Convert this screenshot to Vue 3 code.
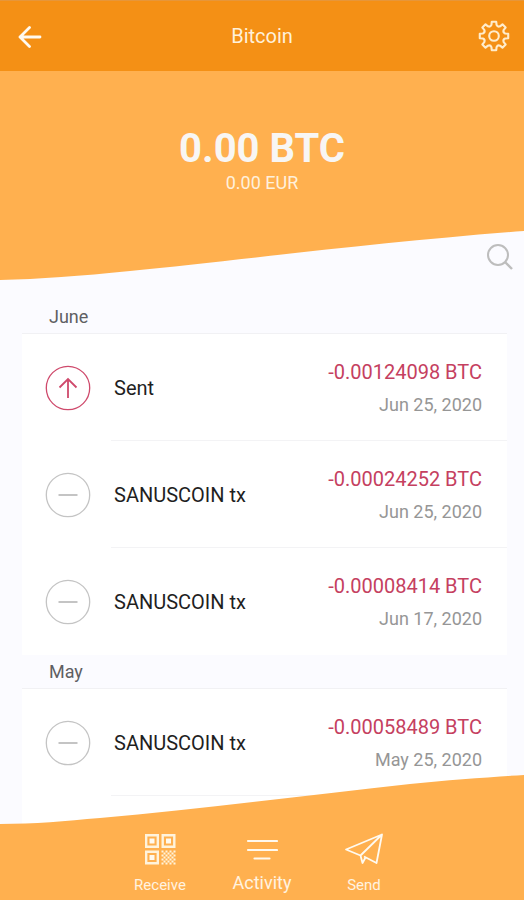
<script setup>
const months = [
  {
    name: 'June',
    items: [
      { label: 'Sent', type: 'sent', amount: '-0.00124098 BTC', date: 'Jun 25, 2020' },
      { label: 'SANUSCOIN tx', type: 'token', amount: '-0.00024252 BTC', date: 'Jun 25, 2020' },
      { label: 'SANUSCOIN tx', type: 'token', amount: '-0.00008414 BTC', date: 'Jun 17, 2020' },
    ],
  },
  {
    name: 'May',
    items: [
      { label: 'SANUSCOIN tx', type: 'token', amount: '-0.00058489 BTC', date: 'May 25, 2020' },
    ],
  },
]

// Outline of a gear centred on the origin, with rounded valleys between the teeth.
function gearPath(teeth, outer, root) {
  const step = 360 / teeth
  const point = (radius, degrees) => {
    const a = (degrees * Math.PI) / 180
    return `${(radius * Math.sin(a)).toFixed(2)} ${(-radius * Math.cos(a)).toFixed(2)}`
  }
  let d = `M${point(outer, -9)}`
  for (let i = 0; i < teeth; i++) {
    const a = i * step
    d += `L${point(outer, a + 9)}L${point(root + 1, a + 13)}`
    d += `Q${point(root - 1, a + step / 2)} ${point(root + 1, a + step - 13)}L${point(outer, a + step - 9)}`
  }
  return `${d}Z`
}
const gear = gearPath(8, 14.4, 10.4)
</script>

<template>
  <div class="wallet">
    <header class="bar">
      <button class="icon-button" type="button" aria-label="Back">
        <svg width="24" height="24" viewBox="0 0 24 24" fill="none" stroke="#fffaf0" stroke-width="2.8" stroke-linecap="round" stroke-linejoin="round">
          <path d="M22 13H2M11.500 3.500L2 13l9.500 9.500" />
        </svg>
      </button>
      <h1 class="title">Bitcoin</h1>
      <button class="icon-button" type="button" aria-label="Settings">
        <svg width="32" height="32" viewBox="-16 -16 32 32" fill="none" stroke="#ffeccb" stroke-width="2.1" stroke-linejoin="round">
          <path :d="gear" />
          <circle r="4.8" />
        </svg>
      </button>
    </header>

    <section class="balance">
      <p class="crypto">0.00 BTC</p>
      <p class="fiat">0.00 EUR</p>
    </section>
    <div class="slope-row">
      <svg class="slope" viewBox="0 0 524 50" preserveAspectRatio="none" aria-hidden="true">
        <path d="M0 0H524V1C380 12 240 30 130 41C80 46 40 49 0 50Z" />
      </svg>
      <button class="search" type="button" aria-label="Search">
        <svg width="28" height="28" viewBox="0 0 28 28" fill="none" stroke="#bdbdbd" stroke-width="2">
          <circle cx="12" cy="12" r="10" />
          <path d="M19 19l7 7" stroke-width="2.4" />
        </svg>
      </button>
    </div>

    <main class="history">
      <section v-for="month in months" :key="month.name" class="group">
        <h2 class="month">{{ month.name }}</h2>
        <ul class="list">
          <li v-for="(tx, i) in month.items" :key="i" class="tx">
            <svg class="badge" :class="tx.type" width="46" height="46" viewBox="0 0 46 46" fill="none" stroke="currentColor" aria-hidden="true">
              <circle cx="23" cy="23" r="21.7" stroke-width="1.3" />
              <path v-if="tx.type === 'sent'" d="M23 33V14M14.5 22.5L23 14l8.500 8.500" stroke-width="1.8" />
              <path v-else d="M13.500 23h19" stroke-width="2" />
            </svg>
            <div class="detail">
              <span class="label">{{ tx.label }}</span>
              <span class="figures">
                <span class="amount">{{ tx.amount }}</span>
                <span class="date">{{ tx.date }}</span>
              </span>
            </div>
          </li>
        </ul>
      </section>
    </main>

    <footer class="dock">
      <svg class="slope" viewBox="0 0 524 50" preserveAspectRatio="none" aria-hidden="true">
        <path d="M0 50V49C35 49 65 46 100 43C200 34 310 20 410 9C450 5 490 2 524 0V50Z" />
      </svg>
      <nav class="tabs">
        <button class="tab" type="button">
          <svg width="32" height="32" viewBox="0 0 32 32" fill="none" stroke="#fff3dc" aria-hidden="true">
            <path d="M2.200 2.200h11.600v11.600H2.200zM18.700 2.200h11.600v11.600H18.700zM2.200 18.700h11.600v11.600H2.200z" stroke-width="2.400" />
            <path d="M5.500 5.500h5v5h-5zM22 5.500h5v5h-5zM5.500 22h5v5h-5z" fill="#fff9ee" stroke="none" />
            <path d="M17.500 18.500h14M17.500 22.500h14M17.500 26.500h14M17.500 30.500h14" stroke-width="2" stroke-dasharray="2 2" />
            <path d="M19.500 20.500h12M19.500 24.500h12M19.500 28.500h12" stroke-width="2" stroke-dasharray="2 2" />
          </svg>
          <span>Receive</span>
        </button>
        <button class="tab active" type="button">
          <svg width="32" height="32" viewBox="0 0 32 32" fill="none" stroke="#fff9ee" stroke-width="2.200" stroke-linecap="round" aria-hidden="true">
            <path d="M2 8h29M2 17h29M8.500 25.500h15" />
          </svg>
          <span>Activity</span>
        </button>
        <button class="tab" type="button">
          <svg width="40" height="32" viewBox="0 0 40 32" fill="none" stroke="#fffaf0" stroke-width="1.800" stroke-linejoin="round" aria-hidden="true">
            <path d="M38 1.500L2 16.500l14.500 6zM38 1.500L32.500 30l-12.500-6.500M38 1.500L16.500 22.500 18.500 30l3-5.500" />
          </svg>
          <span>Send</span>
        </button>
      </nav>
    </footer>
  </div>
</template>

<style>
body {
  background: #fbfbff;
}
</style>

<style scoped>
.wallet {
  display: flex;
  flex-direction: column;
  height: 100vh;
  overflow: hidden;
  font-family: Roboto, "Liberation Sans", sans-serif;
}

button {
  padding: 0;
  border: 0;
  background: none;
  font: inherit;
  cursor: pointer;
}

svg {
  display: block;
}

p,
h1,
h2,
ul {
  margin: 0;
  padding: 0;
}

.bar {
  display: grid;
  flex: none;
  grid-template-columns: 32px 1fr 32px;
  align-items: center;
  box-sizing: border-box;
  height: 71px;
  padding: 0 14px;
  border-top: 1px solid #e6963a;
  background: #f49015;
}

.icon-button {
  display: grid;
  place-items: center;
  height: 32px;
}

.title {
  color: #fff1da;
  font-size: 20px;
  font-weight: 400;
  line-height: 24px;
  text-align: center;
}

.balance {
  display: flex;
  flex: none;
  flex-direction: column;
  align-items: center;
  box-sizing: border-box;
  height: 159px;
  padding-top: 54px;
  background: #ffb04f;
}

.crypto {
  color: #f8f6f4;
  font-size: 40px;
  font-weight: 700;
  line-height: 48px;
}

.fiat {
  color: #fff0dc;
  font-size: 18px;
  line-height: 20px;
}

.slope {
  width: 100%;
  height: 50px;
  fill: #ffb04f;
}

.slope-row {
  position: relative;
  flex: none;
}

.search {
  position: absolute;
  top: 13px;
  right: 10px;
}

.history {
  display: flex;
  flex: 1;
  flex-direction: column;
  min-height: 0;
  padding: 20px 17px 0 22px;
}

.group {
  flex: none;
}

.group:last-child {
  flex: 1;
  background: #fff;
}

.month {
  box-sizing: border-box;
  height: 34px;
  padding: 5px 27px 0;
  border-bottom: 1px solid #f1f1f4;
  background: #fbfbff;
  color: #5f5f63;
  font-size: 18px;
  font-weight: 400;
  line-height: 24px;
}

.list {
  list-style: none;
  background: #fff;
}

.tx {
  display: flex;
  align-items: center;
  gap: 20px;
  padding-left: 23px;
}

.badge {
  flex: none;
}

.sent {
  color: #cf4a6c;
}

.token {
  color: #c4c4c4;
}

.detail {
  display: flex;
  flex: 1;
  align-items: center;
  justify-content: space-between;
  box-sizing: border-box;
  height: 107px;
  padding: 2px 25px 0 3px;
  border-bottom: 1px solid #f3f3f5;
}

.group:first-child .tx:last-child .detail {
  border-bottom-color: transparent;
}

.label {
  color: #1f1f1f;
  font-size: 20px;
}

.figures {
  display: flex;
  flex-direction: column;
  gap: 9px;
  text-align: right;
}

.amount {
  color: #c54060;
  font-size: 20px;
  line-height: 24px;
}

.date {
  color: #969696;
  font-size: 18px;
  line-height: 24px;
}

.dock {
  position: fixed;
  right: 0;
  bottom: 0;
  left: 0;
}

.tabs {
  display: flex;
  justify-content: center;
  height: 75px;
  background: #ffb04f;
}

.tab {
  display: flex;
  flex-direction: column;
  align-items: center;
  gap: 10px;
  width: 102px;
  padding-top: 8px;
  color: #fff3e0;
  font-size: 15px;
  line-height: 20px;
}

.active {
  gap: 8px;
  font-size: 18px;
}
</style>
